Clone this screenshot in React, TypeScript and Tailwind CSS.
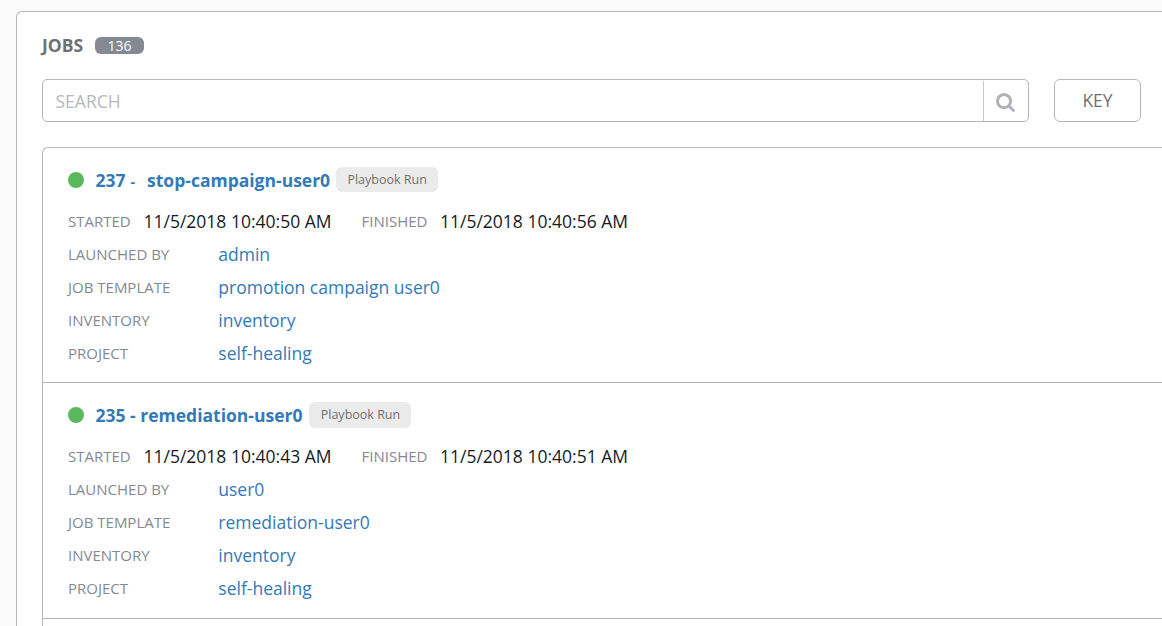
type Job = {
  id: number;
  name: string;
  wideGap: boolean;
  started: string;
  finished: string;
  details: [string, string][];
};

const jobs: Job[] = [
  {
    id: 237,
    name: 'stop-campaign-user0',
    wideGap: true,
    started: '11/5/2018 10:40:50 AM',
    finished: '11/5/2018 10:40:56 AM',
    details: [
      ['LAUNCHED BY', 'admin'],
      ['JOB TEMPLATE', 'promotion campaign user0'],
      ['INVENTORY', 'inventory'],
      ['PROJECT', 'self-healing'],
    ],
  },
  {
    id: 235,
    name: 'remediation-user0',
    wideGap: false,
    started: '11/5/2018 10:40:43 AM',
    finished: '11/5/2018 10:40:51 AM',
    details: [
      ['LAUNCHED BY', 'user0'],
      ['JOB TEMPLATE', 'remediation-user0'],
      ['INVENTORY', 'inventory'],
      ['PROJECT', 'self-healing'],
    ],
  },
];

function SearchIcon() {
  return (
    <svg viewBox="0 0 1664 1664" className="mt-[3px] mr-0.5 h-[19px] w-[19px]" fill="#b0b2b8">
      <path d="M1152 704q0-185-131.500-316.500T704 256 387.500 387.500 256 704t131.500 316.500T704 1152t316.500-131.500T1152 704zm512 832q0 52-38 90t-90 38q-54 0-90-38l-343-342q-179 124-399 124-143 0-273.500-55.500t-225-150-150-225T0 704t55.500-273.500 150-225 225-150T704 0t273.500 55.500 225 150 150 225T1408 704q0 220-124 399l343 343q37 37 37 90z" />
    </svg>
  );
}

function JobRow({ job }: { job: Job }) {
  return (
    <li
      className={`border-b border-[#b7b7b7] pt-[15px] pl-[25px] ${job.wideGap ? 'h-[235px]' : 'h-[236px]'}`}
    >
      <div className="mb-2 flex h-[34px] items-center">
        <span className="h-[15.5px] w-[15.5px] rounded-full bg-[#5cb85c]" />
        <a className="ml-[12px] flex items-baseline font-bold text-[#337ab7]">
          {job.wideGap ? (
            <>
              <span className="text-[17.5px]">{job.id}</span>
              <span className="ml-[5px] text-[14px]">-</span>
              <span className="ml-[12px] text-[17.5px]">{job.name}</span>
            </>
          ) : (
            <span className="text-[17.5px]">
              {job.id} - {job.name}
            </span>
          )}
        </a>
        <span
          className={`flex w-[102px] items-center justify-center rounded-md bg-[#ebebeb] pl-px text-[12.5px] text-[#707070] ${job.wideGap ? 'mb-px ml-[5.5px] h-[25px] pt-px' : 'ml-[6.5px] h-[26px]'}`}
        >
          Playbook Run
        </span>
      </div>
      <div className="flex h-[33px] items-center">
        <span className="w-[75.500px] text-[15px] text-[#848992]">STARTED</span>
        <span className="w-[218px] text-[17.5px] text-[#161b1f]">{job.started}</span>
        <span className="w-[78.500px] text-[15px] text-[#848992]">FINISHED</span>
        <span className="text-[17.5px] text-[#161b1f]">{job.finished}</span>
      </div>
      {job.details.map(([label, value]) => (
        <div key={label} className="flex h-[33px] items-center">
          <span className="w-[150.300px] text-[15px] text-[#848992]">{label}</span>
          <a className="text-[17.5px] text-[#337ab7]">{value}</a>
        </div>
      ))}
    </li>
  );
}

export default function App() {
  return (
    <div className="h-[626px] overflow-hidden bg-[#fbfbfb] pt-[11px] pl-4 font-['Open_Sans',sans-serif] whitespace-nowrap">
      <main className="h-[640px] rounded-tl-[6px] border-t border-l border-[#b7b7b7] bg-white pt-[21px] pl-[25px]">
        <header className="flex h-6 items-center">
          <h1 className="text-[17.5px] font-bold text-[#707070]">JOBS</h1>
          <span className="ml-3 flex h-[17px] w-[49px] items-center justify-center rounded-[6px] bg-[#848992] text-[14px] text-white">
            136
          </span>
        </header>
        <div className="mt-[22px] flex">
          <div className="flex h-[43px] w-[987px] rounded-[5px] border border-[#b7b7b7]">
            <div className="flex flex-1 items-center pt-0.5 pl-[12.500px] text-[17.5px] text-[#b7b7b7]">
              SEARCH
            </div>
            <button className="mt-px flex w-[45px] items-center justify-center border-l border-[#c8c8c8]">
              <SearchIcon />
            </button>
          </div>
          <button className="ml-[25px] h-[43px] w-[87px] rounded-[6px] border border-[#b7b7b7] text-[17.5px] text-[#707070]">
            KEY
          </button>
        </div>
        <ul className="mt-[25px] rounded-tl-[6px] border-t border-l border-[#b7b7b7]">
          {jobs.map((job) => (
            <JobRow key={job.id} job={job} />
          ))}
          <li className="h-10" />
        </ul>
      </main>
    </div>
  );
}
